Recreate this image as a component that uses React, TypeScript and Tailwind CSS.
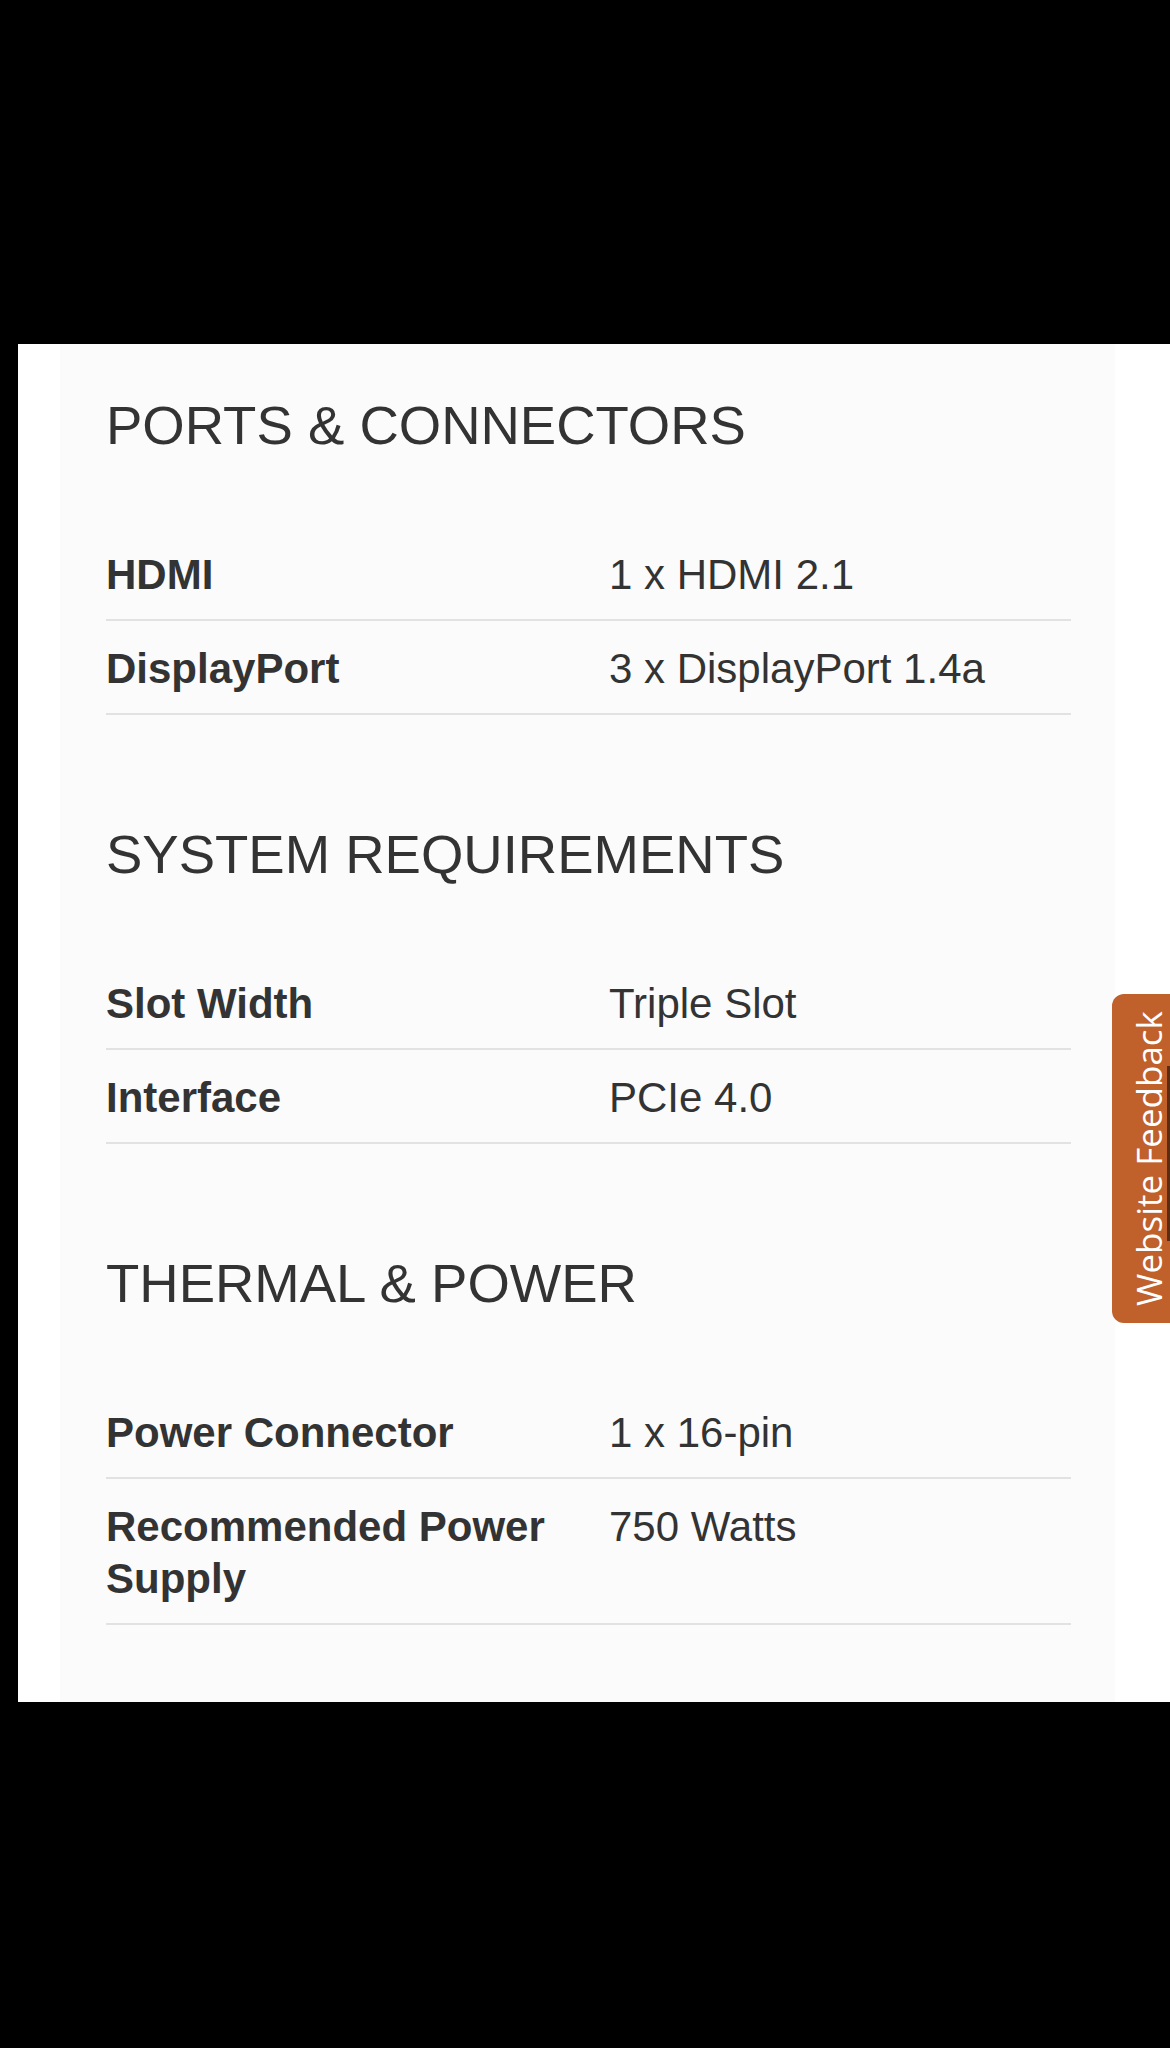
const sections = [
  {
    title: 'PORTS & CONNECTORS',
    rows: [
      { label: 'HDMI', value: '1 x HDMI 2.1' },
      { label: 'DisplayPort', value: '3 x DisplayPort 1.4a' }
    ]
  },
  {
    title: 'SYSTEM REQUIREMENTS',
    rows: [
      { label: 'Slot Width', value: 'Triple Slot' },
      { label: 'Interface', value: 'PCIe 4.0' }
    ]
  },
  {
    title: 'THERMAL & POWER',
    rows: [
      { label: 'Power Connector', value: '1 x 16-pin' },
      { label: 'Recommended Power Supply', value: '750 Watts' }
    ]
  }
]

function SpecSection({ title, rows }: { title: string; rows: { label: string; value: string }[] }) {
  return (
    <section>
      <h2 className="text-[54.5px] leading-[60px] font-normal text-[#333333]">{title}</h2>
      <div className="mt-[71px]">
        {rows.map((row) => (
          <div
            key={row.label}
            className="grid grid-cols-[503px_1fr] pt-[22px] pb-[18px] border-b-2 border-[#e2e2e2] text-[42px] leading-[52px] text-[#333333]"
          >
            <div className="font-bold pr-4">{row.label}</div>
            <div>{row.value}</div>
          </div>
        ))}
      </div>
    </section>
  )
}

export default function App() {
  return (
    <div className="relative w-[1170px] h-[2048px] overflow-hidden bg-black font-['Liberation_Sans',Arial,sans-serif]">
      <div className="pt-[344px]">
        <div className="ml-[18px] bg-white">
          <div className="ml-[42px] w-[1055px] bg-[#fbfbfb] pl-[46px] pr-[44px] pt-[52px] pb-[77px] flex flex-col gap-[110px]">
            {sections.map((s) => (
              <SpecSection key={s.title} title={s.title} rows={s.rows} />
            ))}
          </div>
        </div>
      </div>

      {/* feedback tab */}
      <div className="absolute left-[1112px] top-[994px] w-[80px] h-[329px] rounded-l-[12px] bg-[#c0602a] flex items-center pl-[13px]">
        <span className="[writing-mode:vertical-rl] rotate-180 text-white text-[35px] leading-[47px] font-['Open_Sans',sans-serif] whitespace-nowrap">
          Website Feedback
        </span>
        <div className="absolute left-[55px] top-[72px] w-[3px] h-[175px] bg-[#5b2c12]" />
      </div>
    </div>
  )
}
